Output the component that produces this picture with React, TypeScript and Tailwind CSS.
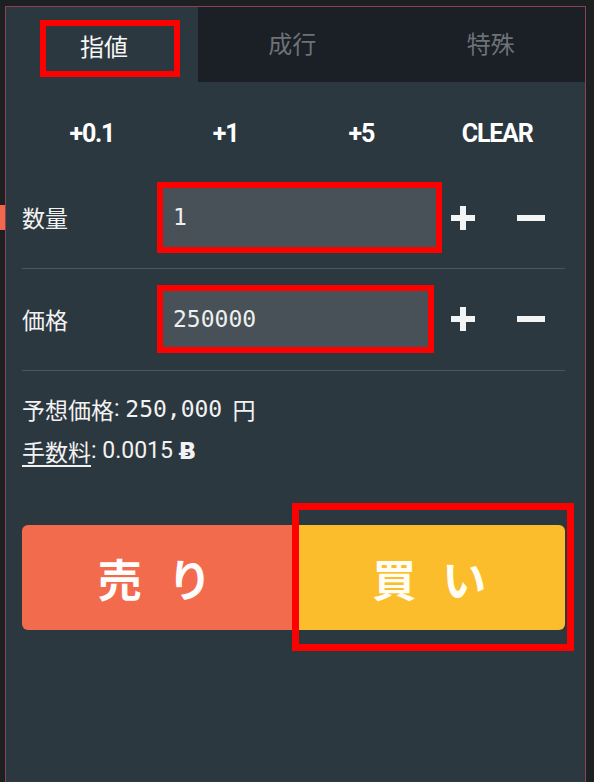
import React from "react";

const jp = { fontFamily: '"Noto Sans CJK JP", "Noto Sans", sans-serif' };
const rb = { fontFamily: 'Roboto, "Noto Sans", sans-serif' };
const mono = { fontFamily: '"DejaVu Sans Mono", "Liberation Mono", monospace' };

function Plus() {
  return (
    <svg width="26" height="26" viewBox="0 0 26 26">
      <rect x="10" y="1" width="6" height="24" fill="#f3f4f4" />
      <rect x="1" y="10" width="24" height="6" fill="#f3f4f4" />
    </svg>
  );
}

function Minus() {
  return (
    <svg width="28" height="26" viewBox="0 0 28 26">
      <rect x="0" y="10" width="28" height="6" fill="#f3f4f4" />
    </svg>
  );
}

function FieldRow({ label, value, w, h }: { label: string; value: string; w: string; h: string }) {
  return (
    <div className="flex items-center">
      <div className="w-[135px] text-[23px] text-[#f2f2f2]" style={jp}>
        {label}
      </div>
      <div className="w-[293px] flex">
        <div className={`${w} ${h} border-[6px] border-[#ff0000] flex`}>
          <div className="flex-1 bg-[#475157] flex items-center pl-[10px] text-[23px] text-[#eef0f0]" style={mono}>
            {value}
          </div>
        </div>
      </div>
      <div className="flex items-center">
        <Plus />
        <div className="ml-[41px]">
          <Minus />
        </div>
      </div>
    </div>
  );
}

export default function App() {
  return (
    <div className="w-[594px] h-[782px] bg-[#1d2020] flex overflow-hidden">
      <div className="w-[5px] flex flex-col">
        <div className="mt-[205px] h-[25px] bg-[#f2684a]" />
      </div>
      <div className="flex-1 mt-[6px] border-t border-l border-r border-[#8a3f5e] bg-[#2c3840] flex flex-col">
        {/* tabs */}
        <div className="flex h-[75px]">
          <div className="w-[192px] bg-[#2c3840] pl-[34px] pt-[13px]">
            <div className="w-[140px] h-[57px] border-[6px] border-[#ff0000] flex items-center justify-center pb-[5px]">
              <span className="text-[24px] text-[#f6f6f6] mr-[12px]" style={jp}>
                指値
              </span>
            </div>
          </div>
          <div className="flex-1 bg-[#1b1f26] flex">
            <div className="flex-1 flex items-center justify-center pr-[10px] pb-[4px] text-[24px] text-[#6c7276]" style={jp}>
              成行
            </div>
            <div className="flex-1 flex items-center justify-center pb-[4px] text-[24px] text-[#6c7276]" style={jp}>
              特殊
            </div>
          </div>
        </div>

        <div className="pl-[16px] pr-[20px] flex flex-col">
          {/* quick buttons */}
          <div className="grid grid-cols-4 h-[100px] items-center pt-[4px] text-[25px] font-bold text-white tracking-[-1.2px]" style={rb}>
            <div className="text-center pl-[4px]">+0.1</div>
            <div className="text-center">+1</div>
            <div className="text-center">+5</div>
            <div className="text-center">CLEAR</div>
          </div>

          {/* quantity */}
          <FieldRow label="数量" value="1" w="w-[285px]" h="h-[71px]" />
          <div className="h-[1px] bg-[#4a565d] mt-[15px]" />

          {/* price */}
          <div className="pt-[16px]">
            <FieldRow label="価格" value="250000" w="w-[277px]" h="h-[68px]" />
          </div>
          <div className="h-[1px] bg-[#4a565d] mt-[17px]" />

          {/* info */}
          <div className="pt-[17px] text-[23px] text-[#f2f2f2]">
            <div className="flex items-center h-[42px]">
              <span style={jp}>予想価格</span>
              <span style={rb}>:&nbsp;</span>
              <span style={mono}>250,000</span>
              <span style={jp}>&nbsp;&nbsp;円</span>
            </div>
            <div className="flex items-center h-[42px]">
              <span className="underline underline-offset-[4px]" style={jp}>
                手数料
              </span>
              <span style={rb}>: 0.0015&nbsp;</span>
              <span className="font-bold" style={{ fontFamily: '"DejaVu Sans", sans-serif' }}>Ƀ</span>
            </div>
          </div>

          {/* buttons */}
          <div className="flex mt-[53px] h-[105px]">
            <div className="flex-1 bg-[#f36b4d] rounded-l-[6px] flex items-center justify-center">
              <span className="text-[44px] font-bold text-[#fdfdfd] tracking-[26px] pl-[26px] pr-[6px]" style={jp}>
                売り
              </span>
            </div>
            <div className="relative flex-1 bg-[#fbbd2b] rounded-r-[6px] flex items-center justify-center">
              <span className="text-[44px] font-bold text-[#fffdf4] tracking-[26px] pl-[26px]" style={jp}>
                買い
              </span>
              <div className="absolute -top-[22px] -bottom-[21px] -left-[2px] -right-[9px] border-[7px] border-[#ff0000]" />
            </div>
          </div>
        </div>
      </div>
      <div className="w-[8px]" />
    </div>
  );
}
